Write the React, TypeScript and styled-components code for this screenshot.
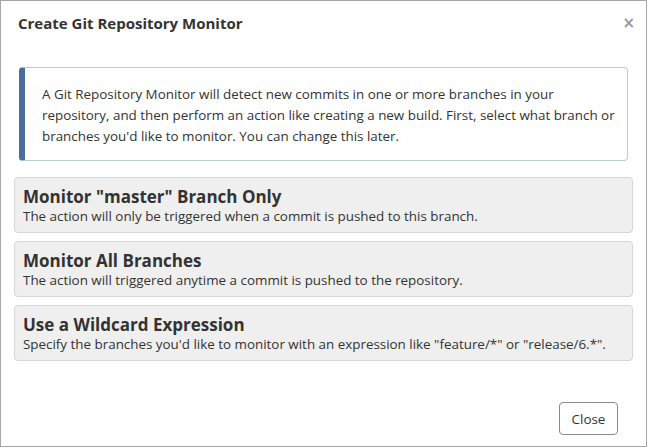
import React from "react";
import styled, { createGlobalStyle } from "styled-components";

const Global = createGlobalStyle`
  html, body { margin: 0; padding: 0; background: #fff; }
  body { font-family: "Open Sans", "Noto Sans", sans-serif; color: #333; }
  * { box-sizing: border-box; }
`;

const Modal = styled.div`
  width: 647px;
  height: 447px;
  border: 1px solid #a6a6a6;
  background: #fff;
  display: flex;
  flex-direction: column;
`;

const Header = styled.div`
  display: flex;
  align-items: center;
  justify-content: space-between;
  height: 44px;
  padding: 0 11px 0 17px;
`;

const Title = styled.h4`
  margin: 0;
  font-size: 15px;
  font-weight: 700;
  color: #333;
  line-height: 20px;
`;

const CloseX = styled.button`
  border: 0;
  background: none;
  padding: 0;
  font-size: 15px;
  font-weight: 700;
  color: #999;
  line-height: 1;
  cursor: pointer;
  font-family: "DejaVu Sans", sans-serif;
`;

const Body = styled.div`
  flex: 1;
  padding: 22px 13px 0 13px;
  display: flex;
  flex-direction: column;
`;

const Alert = styled.div`
  margin: 0 5px 16px 5px;
  border: 1px solid #bccbdb;
  border-left: 6px solid #4a6e9c;
  border-radius: 4px;
  padding: 16px 8px 13px 17px;
  font-size: 13.4px;
  line-height: 21px;
  color: #333;
`;

const Options = styled.div`
  display: flex;
  flex-direction: column;
  gap: 8px;
`;

const Option = styled.button`
  display: block;
  width: 100%;
  text-align: left;
  background: #efefef;
  border: 1px solid #d6d6d6;
  border-radius: 4px;
  padding: 9px 8px 7px 8px;
  font-family: inherit;
  color: #333;
  cursor: pointer;
`;

const OptionTitle = styled.div`
  font-size: 17px;
  font-weight: 700;
  line-height: 20px;
  color: #333;
`;

const OptionDesc = styled.div`
  font-size: 13.4px;
  line-height: 18px;
  color: #333;
`;

const Footer = styled.div`
  display: flex;
  justify-content: flex-end;
  padding: 0 28px 11px 0;
`;

const Button = styled.button`
  width: 59px;
  height: 33px;
  border: 1px solid #8a8a8a;
  border-radius: 4px;
  background: #fff;
  font-family: inherit;
  font-size: 13.4px;
  color: #333;
  cursor: pointer;
`;

const options = [
  {
    title: 'Monitor "master" Branch Only',
    desc: "The action will only be triggered when a commit is pushed to this branch.",
  },
  {
    title: "Monitor All Branches",
    desc: "The action will triggered anytime a commit is pushed to the repository.",
  },
  {
    title: "Use a Wildcard Expression",
    desc: 'Specify the branches you\'d like to monitor with an expression like "feature/*" or "release/6.*".',
  },
];

export default function App() {
  return (
    <>
      <Global />
      <Modal>
        <Header>
          <Title>Create Git Repository Monitor</Title>
          <CloseX aria-label="Close">×</CloseX>
        </Header>
        <Body>
          <Alert>
            A Git Repository Monitor will detect new commits in one or more branches in your
            repository, and then perform an action like creating a new build. First, select what
            branch or branches you'd like to monitor. You can change this later.
          </Alert>
          <Options>
            {options.map((o) => (
              <Option key={o.title}>
                <OptionTitle>{o.title}</OptionTitle>
                <OptionDesc>{o.desc}</OptionDesc>
              </Option>
            ))}
          </Options>
        </Body>
        <Footer>
          <Button>Close</Button>
        </Footer>
      </Modal>
    </>
  );
}
